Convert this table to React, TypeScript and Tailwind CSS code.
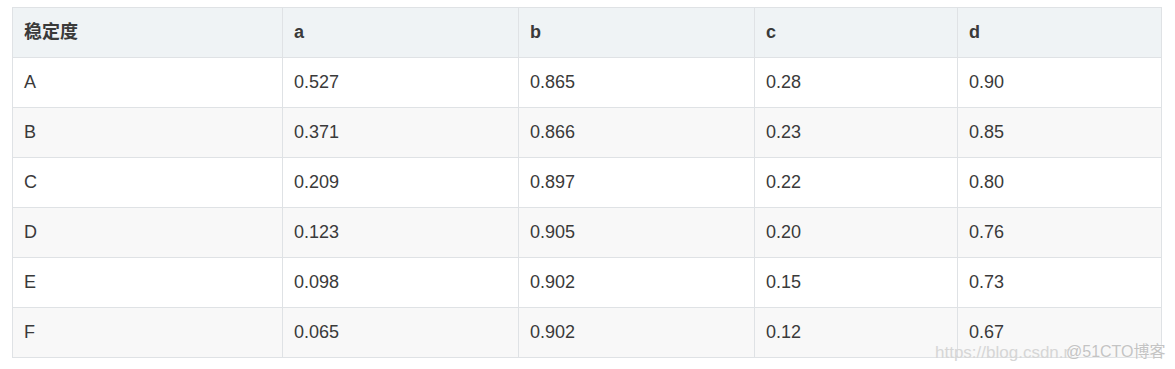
const rows = [
  ["A", "0.527", "0.865", "0.28", "0.90"],
  ["B", "0.371", "0.866", "0.23", "0.85"],
  ["C", "0.209", "0.897", "0.22", "0.80"],
  ["D", "0.123", "0.905", "0.20", "0.76"],
  ["E", "0.098", "0.902", "0.15", "0.73"],
  ["F", "0.065", "0.902", "0.12", "0.67"],
];

const heads = ["稳定度", "a", "b", "c", "d"];
const widths = ["w-[270px]", "w-[236px]", "w-[236px]", "w-[203px]", "w-[204px]"];

export default function App() {
  return (
    <div
      className="relative w-[1175px] h-[369px] bg-white pt-[7px] pl-[12px] text-[#3a3a3a] text-[18px]"
      style={{ fontFamily: '"Liberation Sans", Arial, "Noto Sans CJK SC", sans-serif' }}
    >
      <table className="border-collapse table-fixed w-[1150px]">
        <thead>
          <tr className="bg-[#eff3f5]">
            {heads.map((h, i) => (
              <th
                key={h}
                className={`${widths[i]} h-[50px] border border-[#dfe2e5] pl-[11px] pr-[12px] text-left font-bold`}
              >
                {h}
              </th>
            ))}
          </tr>
        </thead>
        <tbody>
          {rows.map((r, ri) => (
            <tr key={r[0]} className={ri % 2 === 1 ? "bg-[#f8f8f8]" : "bg-white"}>
              {r.map((c, ci) => (
                <td key={ci} className="h-[50px] border border-[#dfe2e5] pl-[11px] pr-[12px] text-left">
                  {c}
                </td>
              ))}
            </tr>
          ))}
        </tbody>
      </table>
      <div className="absolute left-[935px] top-[340px] text-[17px] text-[#d6d6d6] whitespace-nowrap">
        https://blog.csdn.n
      </div>
      <div
        className="absolute left-[1066px] top-[340px] text-[16px] text-[#c4c4c4] whitespace-nowrap"
        style={{ textShadow: "0 0 2px #fff" }}
      >
        @51CTO博客
      </div>
    </div>
  );
}
